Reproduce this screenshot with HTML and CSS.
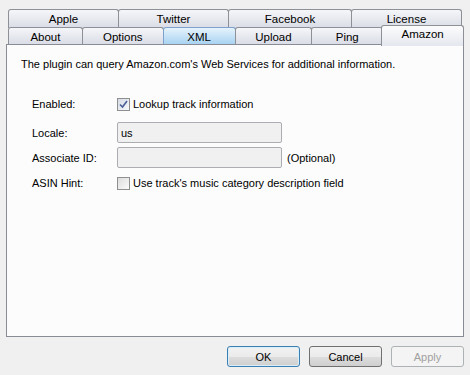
FILE: index.html
```html
<!DOCTYPE html>
<html lang="en">
<head>
    <meta charset="UTF-8">
    <title>Amazon</title>
    <link rel="stylesheet" href="styles.css">
</head>
<body>
    <div class="dialog">
        <div class="tabs">
            <div class="tab-row back">
                <div class="tab w-apple">Apple</div>
                <div class="tab w-twitter">Twitter</div>
                <div class="tab w-facebook">Facebook</div>
                <div class="tab w-license">License</div>
            </div>
            <div class="tab-row front">
                <div class="tab w-about">About</div>
                <div class="tab w-options">Options</div>
                <div class="tab w-xml hover">XML</div>
                <div class="tab w-upload">Upload</div>
                <div class="tab w-ping">Ping</div>
                <div class="tab w-amazon active">Amazon</div>
            </div>
        </div>

        <div class="panel">
            <p class="intro">The plugin can query Amazon.com's Web Services for additional information.</p>

            <div class="form">
                <label class="label">Enabled:</label>
                <label class="check"><span class="box checked"><svg width="9" height="9" viewBox="0 0 9 9"><path d="M1 4.5 L3.5 7 L8 1" fill="none" stroke="#4a5f97" stroke-width="1.6"/></svg></span>Lookup track information</label>

                <label class="label">Locale:</label>
                <div class="field"><input type="text" class="input" value="us"></div>

                <label class="label">Associate ID:</label>
                <div class="field"><input type="text" class="input" value=""><span class="note">(Optional)</span></div>

                <label class="label">ASIN Hint:</label>
                <label class="check"><span class="box"></span>Use track's music category description field</label>
            </div>
        </div>

        <div class="buttons">
            <button class="btn default">OK</button>
            <button class="btn">Cancel</button>
            <button class="btn" disabled>Apply</button>
        </div>
    </div>
</body>
</html>
```

FILE: styles.css
```css
* {
    box-sizing: border-box;
    margin: 0;
    padding: 0;
}

body {
    background-color: #f0f0f0;
    font-family: "Liberation Sans", Arial, sans-serif;
    font-size: 11px;
    color: #000;
    width: 470px;
    height: 375px;
    overflow: hidden;
}

.dialog {
    padding-top: 9px;
}

.tabs {
    padding: 0 6px 0 8px;
}

.tab-row {
    display: flex;
    height: 19px;
}

.tab-row.front {
    margin-top: -1px;
    height: 17px;
    align-items: flex-end;
    position: relative;
    z-index: 2;
}

.tab {
    height: 19px;
    border: 1px solid #8d9096;
    border-bottom: none;
    border-radius: 3px 3px 0 0;
    background: linear-gradient(#f5f6f9, #dadde6);
    text-align: center;
    line-height: 19px;
    font-size: 11.5px;
    margin-right: -1px;
}

.front .tab {
    height: 17px;
    line-height: 18px;
}

.front .tab.hover {
    background: linear-gradient(#e6f3fc, #a8d3f1);
    border-color: #7da2ce;
}

.front .tab.active {
    height: 21px;
    margin-left: -1px;
    margin-right: 0;
    margin-bottom: -2px;
    background: linear-gradient(#fcfcfc, #e4e7ee);
    line-height: 16px;
}

.w-apple { width: 111px; }
.w-twitter { width: 111px; }
.w-facebook { width: 124px; }
.w-license { width: 111px; }

.w-about { width: 75px; }
.w-options { width: 82px; }
.w-xml { width: 73px; }
.w-upload { width: 78px; }
.w-ping { width: 72px; }
.w-amazon { width: 83px; }

.panel {
    margin: 0 6px;
    height: 293px;
    border: 1px solid #898c95;
    background-color: #fcfcfc;
    padding: 13px 14px;
}

.intro {
    line-height: 13px;
}

.form {
    display: grid;
    grid-template-columns: 85px 1fr;
    grid-template-rows: 28px 21px 21px 22px;
    row-gap: 4px;
    align-items: center;
    margin-top: 19px;
    padding-left: 11px;
}

.check {
    display: flex;
    align-items: center;
}

.box {
    width: 13px;
    height: 13px;
    border: 1px solid #8f8f8f;
    background: linear-gradient(135deg, #dcdcdc, #fbfbfb);
    margin-right: 3px;
    display: flex;
    align-items: center;
    justify-content: center;
}

.box.checked {
    background: linear-gradient(135deg, #d6dbe6, #f6f8fb);
}

.field {
    display: flex;
    align-items: center;
}

.input {
    width: 165px;
    height: 21px;
    border: 1px solid #abadb3;
    border-radius: 2px;
    background-color: #f0f0f0;
    font-family: "Liberation Sans", Arial, sans-serif;
    font-size: 11px;
    padding: 0 3px;
    color: #000;
}

.note {
    margin-left: 5px;
}

.buttons {
    display: flex;
    justify-content: flex-end;
    gap: 9px;
    padding: 9px 6px 0 0;
}

.btn {
    width: 73px;
    height: 21px;
    border: 1px solid #707070;
    border-radius: 3px;
    background: linear-gradient(#f2f2f2 0%, #ebebeb 50%, #dddddd 51%, #cfcfcf 100%);
    font-family: "Liberation Sans", Arial, sans-serif;
    font-size: 11px;
    color: #000;
}

.btn.default {
    border-color: #3c7fb1;
    box-shadow: inset 0 0 0 1px #d8eefb;
}

.btn:disabled {
    border-color: #adb2b5;
    background: #f4f4f4;
    color: #a0a0a0;
}
```
